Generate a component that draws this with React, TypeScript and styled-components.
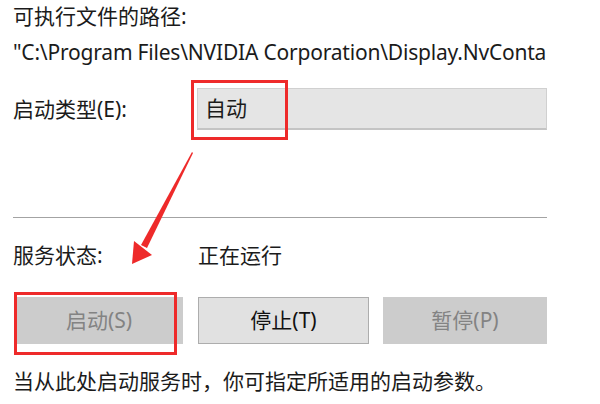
import React from "react";
import styled, { createGlobalStyle } from "styled-components";

const GlobalStyle = createGlobalStyle`
  html, body {
    margin: 0;
    padding: 0;
    background: #ffffff;
  }
  body {
    font-family: "Noto Sans", "Noto Sans CJK SC", sans-serif;
    color: #1b1b1b;
  }
`;

const Page = styled.div`
  position: relative;
  width: 547px;
  height: 404px;
  box-sizing: border-box;
  padding: 0 0 0 13px;
  display: flex;
  flex-direction: column;
  font-size: 21px;
  line-height: 27px;
  overflow: hidden;
`;

const Text = styled.div<{ $top?: number }>`
  margin-top: ${(p) => p.$top ?? 0}px;
  white-space: nowrap;
`;

// the path line is narrower in the original font
const PathText = styled(Text)`
  letter-spacing: -0.2px;
`;

const Row = styled.div<{ $top: number }>`
  display: flex;
  align-items: center;
  margin-top: ${(p) => p.$top}px;
`;

const Label = styled.div<{ $width: number }>`
  width: ${(p) => p.$width}px;
  flex: none;
`;

const Combo = styled.div`
  position: relative;
  flex: 1;
  height: 42px;
  box-sizing: border-box;
  background: #e5e5e5;
  border: 1px solid #d0d0d0;
  border-bottom: 2px solid #c4c4c4;
  display: flex;
  align-items: center;
  padding-left: 7px;
`;

const Separator = styled.div<{ $top: number }>`
  margin-top: ${(p) => p.$top}px;
  height: 1px;
  background: #a3a3a3;
`;

const ButtonRow = styled.div`
  display: flex;
  margin-top: 28px;
  padding-left: 2px;
  gap: 15px;
`;

const Button = styled.div<{ $width: number; $disabled?: boolean; $shift?: number }>`
  position: relative;
  width: ${(p) => p.$width}px;
  height: 47px;
  box-sizing: border-box;
  margin-left: ${(p) => p.$shift ?? 0}px;
  display: flex;
  align-items: center;
  justify-content: center;
  background: ${(p) => (p.$disabled ? "#cccccc" : "#e1e1e1")};
  border: 1px solid ${(p) => (p.$disabled ? "#cccccc" : "#adadad")};
  color: ${(p) => (p.$disabled ? "#838383" : "#111111")};
`;

const Highlight = styled.div<{ $l: number; $t: number; $w: number; $h: number }>`
  position: absolute;
  left: ${(p) => p.$l}px;
  top: ${(p) => p.$t}px;
  width: ${(p) => p.$w}px;
  height: ${(p) => p.$h}px;
  box-sizing: border-box;
  border: 3px solid #ee2a2a;
  pointer-events: none;
`;

const ArrowLayer = styled.svg`
  position: absolute;
  left: 0;
  top: 0;
  pointer-events: none;
`;

function Arrow() {
  return (
    <ArrowLayer width="600" height="404" viewBox="0 0 600 404">
      <polygon points="192,152 193,153 147,248 141,245" fill="#ee2a2a" />
      <polygon points="132,264 134,241 152,255" fill="#ee2a2a" />
    </ArrowLayer>
  );
}

export default function App() {
  return (
    <>
      <GlobalStyle />
      <Page>
        <Text $top={3}>可执行文件的路径:</Text>
        <PathText $top={9}>"C:\Program Files\NVIDIA Corporation\Display.NvConta</PathText>
        <Row $top={22}>
          <Label $width={184}>启动类型(E):</Label>
          <Combo>
            自动
            <Highlight $l={-7} $t={-9} $w={97} $h={60} />
          </Combo>
        </Row>
        <Separator $top={87} />
        <Row $top={24}>
          <Label $width={185}>服务状态:</Label>
          <div>正在运行</div>
        </Row>
        <ButtonRow>
          <Button $width={168} $disabled>
            启动(S)
            <Highlight $l={-2} $t={-6} $w={163} $h={63} />
          </Button>
          <Button $width={171}>停止(T)</Button>
          <Button $width={164} $disabled $shift={-1}>
            暂停(P)
          </Button>
        </ButtonRow>
        <Text $top={24}>当从此处启动服务时，你可指定所适用的启动参数。</Text>
        <Arrow />
      </Page>
    </>
  );
}
